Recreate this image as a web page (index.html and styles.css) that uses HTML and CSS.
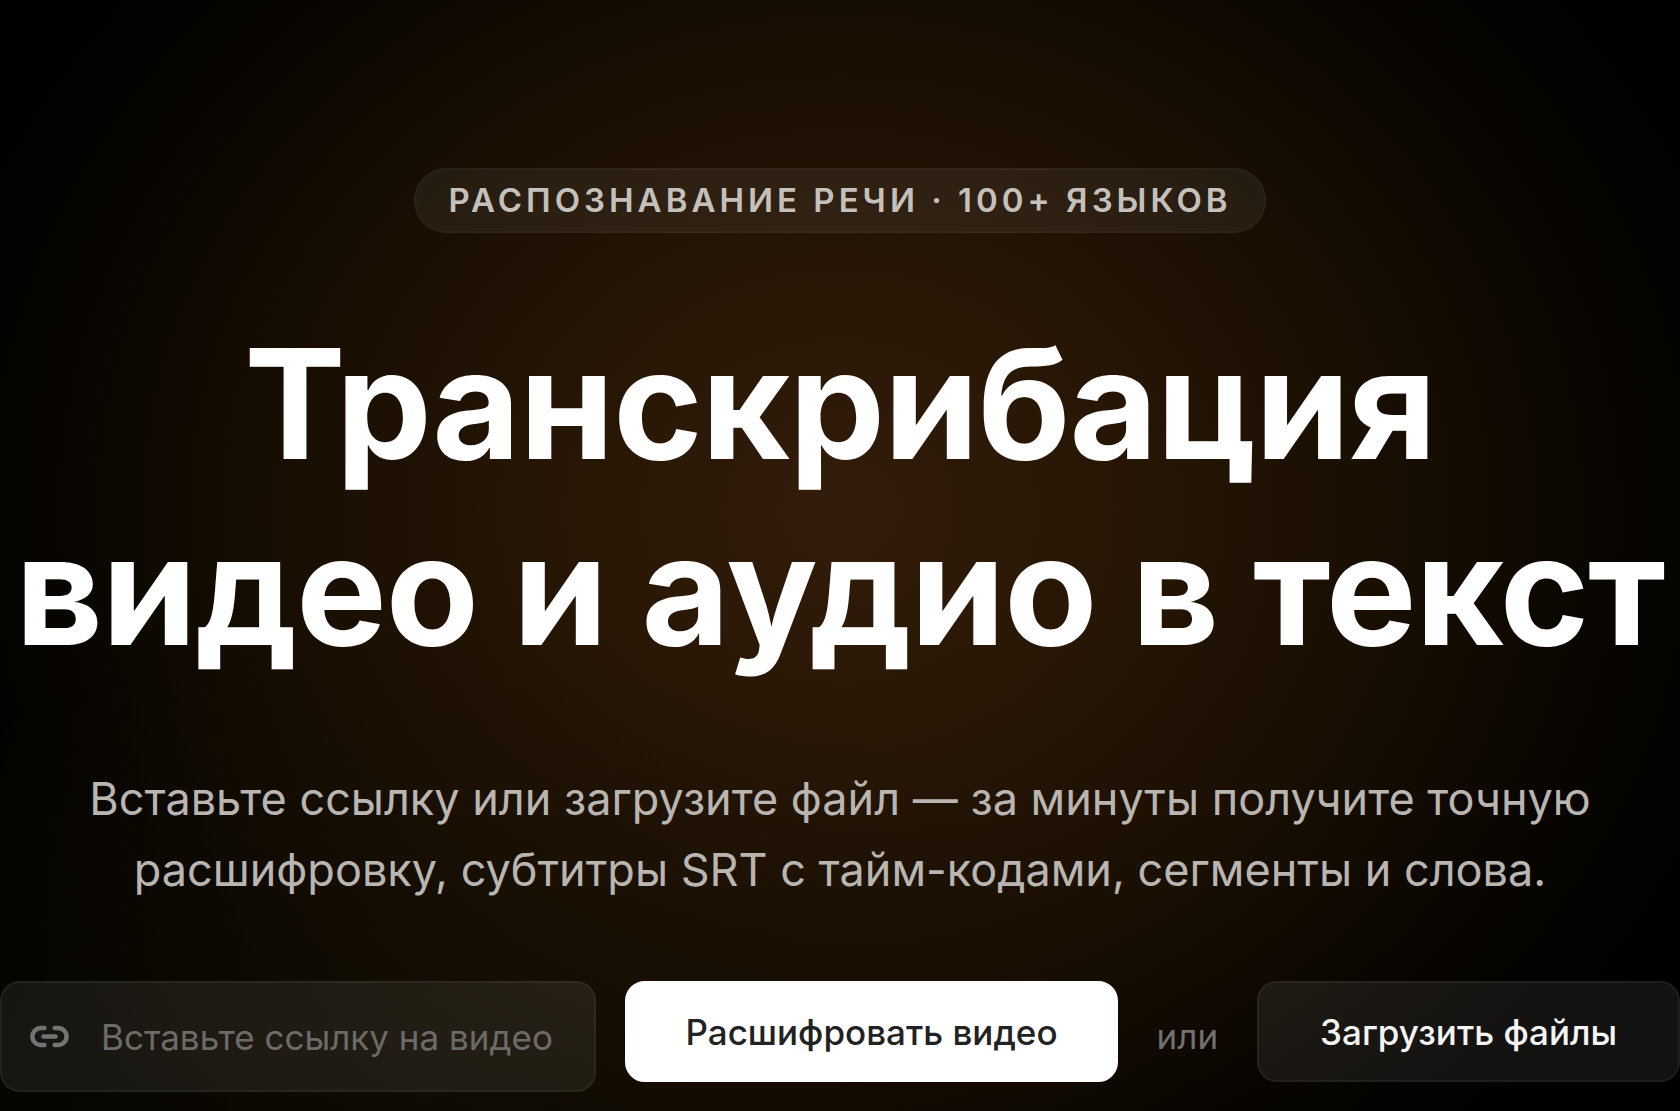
FILE: index.html
```html
<!DOCTYPE html>
<html lang="ru">
<head>
  <meta charset="UTF-8">
  <meta name="viewport" content="width=device-width, initial-scale=1">
  <title>Транскрибация видео и аудио в текст</title>
  <link rel="stylesheet" href="styles.css">
</head>
<body>
  <main class="hero">
    <div class="badge">РАСПОЗНАВАНИЕ РЕЧИ · 100+ ЯЗЫКОВ</div>

    <h1 class="title">Транскрибация<br>видео и аудио в текст</h1>

    <p class="lead">Вставьте ссылку или загрузите файл — за минуты получите точную расшифровку, субтитры SRT с тайм-кодами, сегменты и слова.</p>

    <form class="actions">
      <label class="field" for="videoUrl">
        <svg class="field-icon" viewBox="0 0 24 24" aria-hidden="true">
          <path d="M9 17H7A5 5 0 0 1 7 7h2"/>
          <path d="M15 7h2a5 5 0 1 1 0 10h-2"/>
          <path d="M8.5 12h7"/>
        </svg>
        <input class="field-input" type="text" id="videoUrl" placeholder="Вставьте ссылку на видео">
      </label>
      <button class="btn btn-primary" type="button">Расшифровать видео</button>
      <span class="or">или</span>
      <button class="btn btn-secondary" type="button">Загрузить файлы</button>
    </form>
  </main>
</body>
</html>
```

FILE: styles.css
```css
* {
  box-sizing: border-box;
}
body {
  margin: 0;
  background: #000;
  color: #fff;
  font-family: Inter, "Liberation Sans", sans-serif;
}
.hero {
  display: flex;
  flex-direction: column;
  align-items: center;
  min-height: 100vh;
  padding: 168px 0 18px;
  background:
    radial-gradient(ellipse 46% 36% at 25% 95%, rgba(22, 16, 4, 0.6), transparent),
    radial-gradient(ellipse 53% 70% at 50% 46%, #331c0a 0%, #271605 32%, #160d02 66%, #080501 88%, #000 110%);
}
.badge {
  margin-bottom: 78px;
  padding: 0 32px;
  border: 2px solid rgba(255, 255, 255, 0.03);
  border-radius: 33px;
  background: rgba(255, 255, 255, 0.06);
  color: #c4c0bc;
  font-size: 33px;
  font-weight: 600;
  line-height: 61px;
  letter-spacing: 4px;
}
.title {
  margin: 0 0 80px;
  font-size: 152px;
  font-weight: 700;
  line-height: 186px;
  letter-spacing: -1px;
  text-align: center;
  white-space: nowrap;
}
.lead {
  max-width: 1560px;
  margin: 0 0 76px;
  color: #b9b5b1;
  font-size: 45px;
  line-height: 71px;
  text-align: center;
}
.actions {
  display: flex;
  align-items: flex-start;
  gap: 29px;
  width: 100%;
}
.field {
  display: flex;
  flex: 1;
  align-items: center;
  gap: 31px;
  min-width: 0;
  height: 111px;
  padding: 0 27px;
  border: 2px solid rgba(255, 255, 255, 0.05);
  border-radius: 20px;
  background: rgba(255, 255, 255, 0.07);
}
.field-icon {
  flex: none;
  width: 41px;
  height: 41px;
  fill: none;
  stroke: #747371;
  stroke-width: 2.6;
  stroke-linecap: round;
}
.field-input {
  flex: 1;
  min-width: 0;
  padding: 0;
  border: 0;
  outline: 0;
  background: none;
  color: #fff;
  font: 400 35px/44px Inter, "Liberation Sans", sans-serif;
}
.field-input::placeholder {
  color: #6d6b68;
  opacity: 1;
}
.btn {
  height: 101px;
  padding: 0 58px;
  border: 2px solid transparent;
  border-radius: 20px;
  font: 500 35px/44px Inter, "Liberation Sans", sans-serif;
  white-space: nowrap;
}
.btn-primary {
  border-color: #fff;
  background: #fff;
  color: #222;
}
.btn-secondary {
  padding: 0 61px;
  border-color: rgba(255, 255, 255, 0.05);
  background: rgba(255, 255, 255, 0.07);
  color: #f4f4f4;
}
.or {
  padding: 0 10px;
  color: #73716e;
  font-size: 35px;
  line-height: 111px;
}
```
